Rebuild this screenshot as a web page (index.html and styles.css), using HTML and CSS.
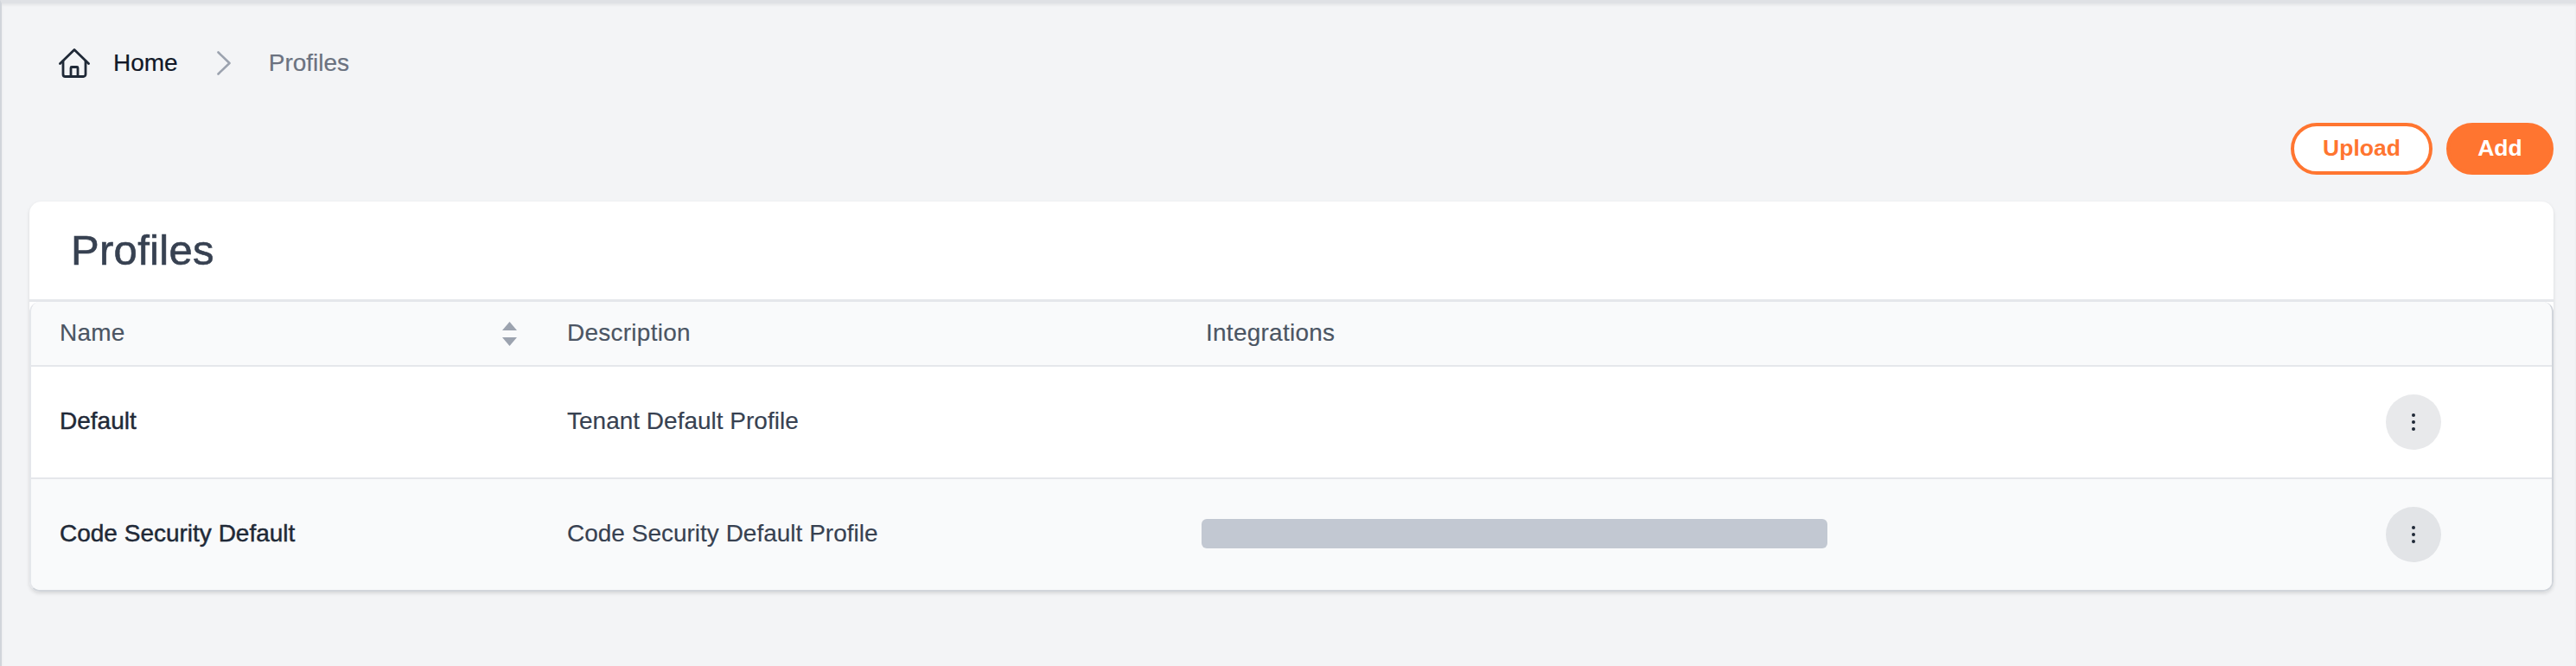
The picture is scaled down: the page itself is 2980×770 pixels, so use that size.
FILE: index.html
```html
<!DOCTYPE html>
<html lang="en">
<head>
<meta charset="utf-8">
<title>Profiles</title>
<link rel="stylesheet" href="styles.css">
</head>
<body>
<div class="page">
  <nav class="breadcrumb">
    <svg class="home-icon" viewBox="0 0 36 34" fill="none" stroke="#1f2937" stroke-width="2.8" stroke-linecap="round" stroke-linejoin="round">
      <path d="M1.500 17.500 18 1.500l16.500 16"/>
      <path d="M5 14.500V30a2.500 2.500 0 0 0 2.500 2.500h21A2.500 2.500 0 0 0 31 30V14.500"/>
      <path d="M14 32.500V22.500a1 1 0 0 1 1-1h6a1 1 0 0 1 1 1v10"/>
    </svg>
    <a class="crumb-home">Home</a>
    <svg class="chevron" viewBox="0 0 16 28" fill="none" stroke="#9ca3af" stroke-width="2.600" stroke-linecap="round" stroke-linejoin="round"><path d="M1.500 1.500 14.500 14 1.500 26.500"/></svg>
    <span class="crumb-current">Profiles</span>
  </nav>
  <div class="actions">
    <button class="btn btn-outline">Upload</button>
    <button class="btn btn-solid">Add</button>
  </div>
  <section class="card">
    <h1 class="card-title">Profiles</h1>
    <div class="table">
      <div class="row head">
        <div class="cell name">Name
          <svg class="sort" viewBox="0 0 17 28" fill="#9ca3af"><path d="M8.500 0 17 10H0z"/><path d="M0 18h17L8.500 28z"/></svg>
        </div>
        <div class="cell desc">Description</div>
        <div class="cell integ">Integrations</div>
      </div>
      <div class="row">
        <div class="cell name strong">Default</div>
        <div class="cell desc">Tenant Default Profile</div>
        <div class="cell integ"></div>
        <div class="cell menu"><button class="kebab"><i></i><i></i><i></i></button></div>
      </div>
      <div class="row alt last">
        <div class="cell name strong">Code Security Default</div>
        <div class="cell desc">Code Security Default Profile</div>
        <div class="cell integ"><div class="redacted"></div></div>
        <div class="cell menu"><button class="kebab"><i></i><i></i><i></i></button></div>
      </div>
    </div>
  </section>
</div>
</body>
</html>
```
FILE: styles.css
```css
* { box-sizing: border-box; }
html, body { margin: 0; height: 100%; }
body {
  background: #f3f4f6;
  font-family: "Liberation Sans", Arial, sans-serif;
  font-size: 28px;
  overflow: hidden;
}
.page {
  height: 770px;
  border-left: 2px solid #d1d5db;
  border-top: 4px solid #dfe1e5;
  box-shadow: inset 0 2px 3px rgba(0, 0, 0, .06);
  padding: 0 26px 0 32px;
}
.breadcrumb {
  display: flex;
  align-items: center;
  height: 68px;
  margin-top: 35px;
  margin-left: 34px;
}
.home-icon { width: 36px; height: 34px; margin-right: 27px; }
.crumb-home { color: #111827; -webkit-text-stroke: .2px currentColor; }
.chevron { width: 16px; height: 28px; margin: 0 44px 0 45px; }
.crumb-current { color: #6b7280; -webkit-text-stroke: .2px currentColor; }
.actions {
  display: flex;
  justify-content: flex-end;
  gap: 16px;
  margin-top: 35px;
}
.btn {
  height: 60px;
  border-radius: 30px;
  border: 4px solid #ff7530;
  font: inherit;
  font-size: 26.500px;
  font-weight: 700;
  padding: 0 0 2px;
}
.btn-outline { width: 164px; background: #fff; color: #ff7530; }
.btn-solid { width: 124px; background: #ff7530; color: #fff; }
.card {
  margin-top: 31px;
  background: #fff;
  border-radius: 14px 14px 12px 12px;
  box-shadow: 0 2px 4px rgba(0, 0, 0, .12);
}
.card-title {
  margin: 0;
  height: 116px;
  border-bottom: 3px solid #e5e7eb;
  padding: 0 0 0 48px;
  font-size: 49px;
  letter-spacing: .3px;
  font-weight: 400;
  -webkit-text-stroke: .6px currentColor;
  color: #374151;
  line-height: 112px;
}
.table {
  border-radius: 12px;
  overflow: hidden;
  background: #fff;
  border-left: 2px solid #e5e7eb;
  border-right: 2px solid #d1d5db;
  border-bottom: 2px solid #d1d5db;
}
.row {
  display: flex;
  align-items: center;
  height: 130px;
  border-bottom: 2px solid #e5e7eb;
  color: #374151;
  -webkit-text-stroke: .15px currentColor;
}
.row.head {
  height: 75px;
  background: #f9fafb;
  color: #4b5563;
  letter-spacing: .25px;
}
.row.alt { background: #f9fafb; }
.row.last { border-bottom: 0; height: 128px; }
.cell.name, .cell.desc, .cell.integ { margin-bottom: 2px; }
.cell.name {
  width: 620px;
  padding: 0 0 0 33px;
  position: relative;
}
.row .strong { color: #1f2937; -webkit-text-stroke: .45px currentColor; }
.sort {
  position: absolute;
  right: 58px;
  top: 50%;
  width: 17px;
  height: 28px;
  margin-top: -13px;
}
.cell.desc { width: 739px; }
.cell.integ { flex: 1; }
.cell.menu { padding-right: 128px; }
.redacted {
  width: 724px;
  height: 34px;
  margin-left: -5px;
  background: #c2c8d2;
  border-radius: 6px;
}
.kebab {
  width: 64px;
  height: 64px;
  border-radius: 50%;
  border: 0;
  padding: 0;
  background: rgba(31, 41, 55, .1);
  display: flex;
  flex-direction: column;
  align-items: center;
  justify-content: center;
  gap: 4px;
}
.kebab i {
  width: 4px;
  height: 4px;
  border-radius: 50%;
  background: #1f2937;
}
```
